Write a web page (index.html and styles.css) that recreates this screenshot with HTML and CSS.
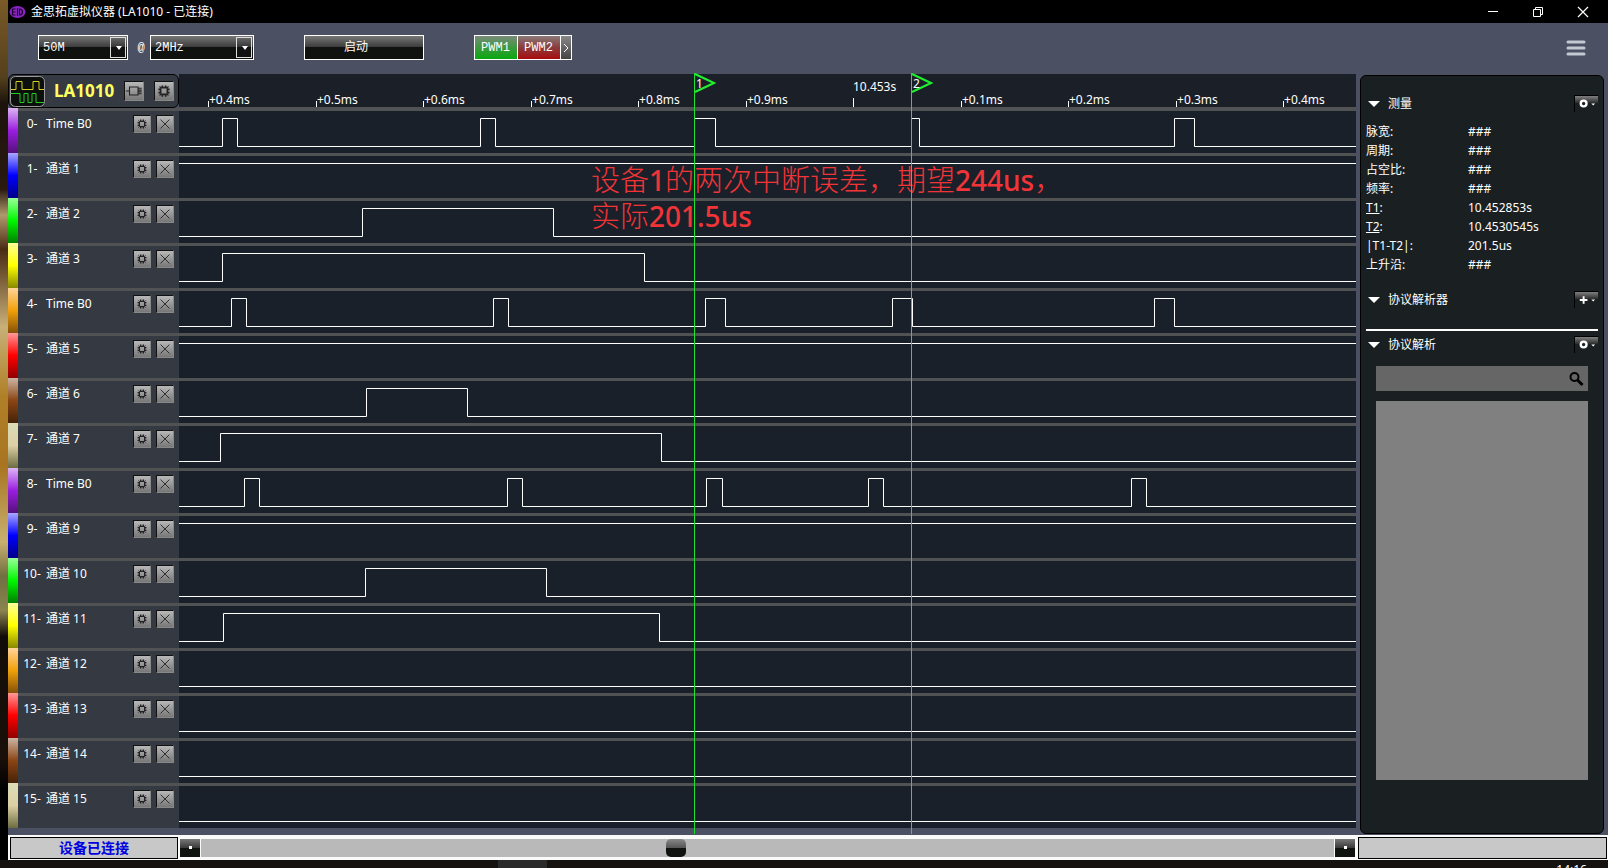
FILE: index.html
```html
<!DOCTYPE html>
<html lang="zh-CN">
<head>
<meta charset="utf-8">
<title>金思拓虚拟仪器 (LA1010 - 已连接)</title>
<link rel="stylesheet" href="styles.css">
</head>
<body>
<svg class="defs" aria-hidden="true">
  <symbol id="gear" viewBox="0 0 18 18">
    <path d="M6.500 6h5M6.500 12h5M6 6.500v5M12 6.500v5" fill="none" stroke="#222" stroke-width="1.500"/>
    <path d="M7.500 4v2M10.500 4v2M7.500 12v2M10.500 12v2M4 7.500h2M4 10.500h2M12 7.500h2M12 10.500h2" stroke="#222" stroke-width="1.500"/>
    <path d="M5 5l1.500 1.500M13 5l-1.500 1.500M5 13l1.500-1.500M13 13l-1.500-1.500" stroke="#222"/>
  </symbol>
  <symbol id="cross" viewBox="0 0 18 18"><path d="M4 4l10 10M14 4L4 14" stroke="#222" stroke-width="1"/></symbol>
  <symbol id="ring" viewBox="0 0 24 16"><circle cx="9" cy="7.500" r="3" fill="none" stroke="#fff" stroke-width="2.500"/><path d="M17 7.500h4l-2 2z" fill="#fff"/></symbol>
  <symbol id="plus" viewBox="0 0 24 16"><path d="M5 8h8M9 4v8" stroke="#fff" stroke-width="2"/><path d="M17 7.500h4l-2 2z" fill="#fff"/></symbol>
</svg>
<div class="desktop">
  <div class="wallpaper"></div>
  <div class="app">
    <header class="titlebar">
      <svg class="logo" viewBox="0 0 16 14"><ellipse cx="8" cy="7" rx="8" ry="6" fill="#8a24c4"/><path d="M3 4v6h3M3 4h3M3 7h3M8 3v8M10 4c4 0 4 6 0 6z" fill="none" stroke="#200030" stroke-width="1.200"/></svg>
      <h1 class="title">金思拓虚拟仪器 (LA1010 - 已连接)</h1>
      <button class="win" aria-label="最小化"><svg viewBox="0 0 12 12"><path d="M1 5.500h10" stroke="#fff"/></svg></button>
      <button class="win" aria-label="还原"><svg viewBox="0 0 12 12"><path d="M1.500 3.500h7v7h-7zM3.500 3.500v-2h7v7h-2" fill="none" stroke="#fff"/></svg></button>
      <button class="win" aria-label="关闭"><svg viewBox="0 0 12 12"><path d="M1 1l10 10M11 1L1 11" stroke="#fff" stroke-width="1.200"/></svg></button>
    </header>
    <div class="toolbar">
      <span class="combo depth"><select aria-label="采样深度"><option>50M</option></select></span>
      <span class="at">@</span>
      <span class="combo rate"><select aria-label="采样频率"><option>2MHz</option></select></span>
      <button class="start">启动</button>
      <div class="pwm"><button class="pwm1">PWM1</button><button class="pwm2">PWM2</button><button class="more" aria-label="更多"><svg viewBox="0 0 8 12"><path d="M2 2l4 4-4 4" fill="none" stroke="#fff"/></svg></button></div>
      <button class="menu" aria-label="菜单"><svg viewBox="0 0 20 16"><path d="M2 2h16M2 8h16M2 14h16" stroke="#c4c8d2" stroke-width="3" stroke-linecap="round"/></svg></button>
    </div>
    <main class="main">
      <section class="analyzer">
        <div class="head">
          <div class="device">
            <svg class="wave-icon" viewBox="0 0 35 31"><rect x=".5" y=".5" width="34" height="30" rx="5" fill="#0c0f0c" stroke="#9a9a9a"/><path d="M1 13.500h5v-8h6v8h11v-8h6v8h5" fill="none" stroke="#d8d020"/><path d="M1 17.500h9v9h4v-9h4v9h4v-9h4v9h8" fill="none" stroke="#20d020"/></svg>
            <strong class="model">LA1010</strong>
            <button class="sq" aria-label="芯片"><svg viewBox="0 0 20 20"><path d="M5 5.500h9.500v9H5zM1 10H5M14.500 7h4M14.500 9h4M14.500 11h4M14.500 13h4" fill="none" stroke="#222" stroke-width="1.200"/></svg></button>
            <button class="sq" aria-label="设备设置"><svg viewBox="1 1 16 16"><use href="#gear" width="18" height="18"/></svg></button>
          </div>
          <div class="ruler">
            <span class="tick" style="left:2.46%">+0.4ms</span>
            <span class="tick" style="left:11.64%">+0.5ms</span>
            <span class="tick" style="left:20.73%">+0.6ms</span>
            <span class="tick" style="left:29.91%">+0.7ms</span>
            <span class="tick" style="left:39%">+0.8ms</span>
            <span class="tick" style="left:48.17%">+0.9ms</span>
            <span class="tick major" style="left:57.26%">10.453s</span>
            <span class="tick" style="left:66.44%">+0.1ms</span>
            <span class="tick" style="left:75.53%">+0.2ms</span>
            <span class="tick" style="left:84.71%">+0.3ms</span>
            <span class="tick" style="left:93.8%">+0.4ms</span>
          </div>
        </div>
        <div class="row purple"><div class="channel"><span class="num">0-</span><span class="name">Time B0</span><button aria-label="设置通道 0"><svg><use href="#gear"/></svg></button><button aria-label="关闭通道 0"><svg><use href="#cross"/></svg></button></div><svg class="wave" viewBox="0 0 1177 42" preserveAspectRatio="none"><path d="M0 35.500H43.500V7.500H58.500V35.500H301.500V7.500H316.500V35.500H515.500V7.500H536.500V35.500H732.500V7.500H740.500V35.500H995.500V7.500H1015.500V35.500H1177"/></svg></div>
        <div class="row blue"><div class="channel"><span class="num">1-</span><span class="name">通道 1</span><button aria-label="设置通道 1"><svg><use href="#gear"/></svg></button><button aria-label="关闭通道 1"><svg><use href="#cross"/></svg></button></div><svg class="wave" viewBox="0 0 1177 42" preserveAspectRatio="none"><path d="M0 7.500H1177"/></svg></div>
        <div class="row green"><div class="channel"><span class="num">2-</span><span class="name">通道 2</span><button aria-label="设置通道 2"><svg><use href="#gear"/></svg></button><button aria-label="关闭通道 2"><svg><use href="#cross"/></svg></button></div><svg class="wave" viewBox="0 0 1177 42" preserveAspectRatio="none"><path d="M0 35.500H183.500V7.500H374.500V35.500H1177"/></svg></div>
        <div class="row yellow"><div class="channel"><span class="num">3-</span><span class="name">通道 3</span><button aria-label="设置通道 3"><svg><use href="#gear"/></svg></button><button aria-label="关闭通道 3"><svg><use href="#cross"/></svg></button></div><svg class="wave" viewBox="0 0 1177 42" preserveAspectRatio="none"><path d="M0 35.500H43.500V7.500H465.500V35.500H1177"/></svg></div>
        <div class="row orange"><div class="channel"><span class="num">4-</span><span class="name">Time B0</span><button aria-label="设置通道 4"><svg><use href="#gear"/></svg></button><button aria-label="关闭通道 4"><svg><use href="#cross"/></svg></button></div><svg class="wave" viewBox="0 0 1177 42" preserveAspectRatio="none"><path d="M0 35.500H52.500V7.500H67.500V35.500H314.500V7.500H329.500V35.500H526.500V7.500H546.500V35.500H713.500V7.500H733.500V35.500H975.500V7.500H995.500V35.500H1177"/></svg></div>
        <div class="row red"><div class="channel"><span class="num">5-</span><span class="name">通道 5</span><button aria-label="设置通道 5"><svg><use href="#gear"/></svg></button><button aria-label="关闭通道 5"><svg><use href="#cross"/></svg></button></div><svg class="wave" viewBox="0 0 1177 42" preserveAspectRatio="none"><path d="M0 7.500H1177"/></svg></div>
        <div class="row brown"><div class="channel"><span class="num">6-</span><span class="name">通道 6</span><button aria-label="设置通道 6"><svg><use href="#gear"/></svg></button><button aria-label="关闭通道 6"><svg><use href="#cross"/></svg></button></div><svg class="wave" viewBox="0 0 1177 42" preserveAspectRatio="none"><path d="M0 35.500H187.500V7.500H288.500V35.500H1177"/></svg></div>
        <div class="row tan"><div class="channel"><span class="num">7-</span><span class="name">通道 7</span><button aria-label="设置通道 7"><svg><use href="#gear"/></svg></button><button aria-label="关闭通道 7"><svg><use href="#cross"/></svg></button></div><svg class="wave" viewBox="0 0 1177 42" preserveAspectRatio="none"><path d="M0 35.500H41.500V7.500H482.500V35.500H1177"/></svg></div>
        <div class="row purple"><div class="channel"><span class="num">8-</span><span class="name">Time B0</span><button aria-label="设置通道 8"><svg><use href="#gear"/></svg></button><button aria-label="关闭通道 8"><svg><use href="#cross"/></svg></button></div><svg class="wave" viewBox="0 0 1177 42" preserveAspectRatio="none"><path d="M0 35.500H65.500V7.500H80.500V35.500H328.500V7.500H343.500V35.500H527.500V7.500H543.500V35.500H689.500V7.500H704.500V35.500H952.500V7.500H967.500V35.500H1177"/></svg></div>
        <div class="row blue"><div class="channel"><span class="num">9-</span><span class="name">通道 9</span><button aria-label="设置通道 9"><svg><use href="#gear"/></svg></button><button aria-label="关闭通道 9"><svg><use href="#cross"/></svg></button></div><svg class="wave" viewBox="0 0 1177 42" preserveAspectRatio="none"><path d="M0 7.500H1177"/></svg></div>
        <div class="row green"><div class="channel"><span class="num">10-</span><span class="name">通道 10</span><button aria-label="设置通道 10"><svg><use href="#gear"/></svg></button><button aria-label="关闭通道 10"><svg><use href="#cross"/></svg></button></div><svg class="wave" viewBox="0 0 1177 42" preserveAspectRatio="none"><path d="M0 35.500H186.500V7.500H367.500V35.500H1177"/></svg></div>
        <div class="row yellow"><div class="channel"><span class="num">11-</span><span class="name">通道 11</span><button aria-label="设置通道 11"><svg><use href="#gear"/></svg></button><button aria-label="关闭通道 11"><svg><use href="#cross"/></svg></button></div><svg class="wave" viewBox="0 0 1177 42" preserveAspectRatio="none"><path d="M0 35.500H44.500V7.500H480.500V35.500H1177"/></svg></div>
        <div class="row orange"><div class="channel"><span class="num">12-</span><span class="name">通道 12</span><button aria-label="设置通道 12"><svg><use href="#gear"/></svg></button><button aria-label="关闭通道 12"><svg><use href="#cross"/></svg></button></div><svg class="wave" viewBox="0 0 1177 42" preserveAspectRatio="none"><path d="M0 35.500H1177"/></svg></div>
        <div class="row red"><div class="channel"><span class="num">13-</span><span class="name">通道 13</span><button aria-label="设置通道 13"><svg><use href="#gear"/></svg></button><button aria-label="关闭通道 13"><svg><use href="#cross"/></svg></button></div><svg class="wave" viewBox="0 0 1177 42" preserveAspectRatio="none"><path d="M0 35.500H1177"/></svg></div>
        <div class="row brown"><div class="channel"><span class="num">14-</span><span class="name">通道 14</span><button aria-label="设置通道 14"><svg><use href="#gear"/></svg></button><button aria-label="关闭通道 14"><svg><use href="#cross"/></svg></button></div><svg class="wave" viewBox="0 0 1177 42" preserveAspectRatio="none"><path d="M0 35.500H1177"/></svg></div>
        <div class="row tan"><div class="channel"><span class="num">15-</span><span class="name">通道 15</span><button aria-label="设置通道 15"><svg><use href="#gear"/></svg></button><button aria-label="关闭通道 15"><svg><use href="#cross"/></svg></button></div><svg class="wave" viewBox="0 0 1177 42" preserveAspectRatio="none"><path d="M0 35.500H1177"/></svg></div>
        <div class="overlay">
          <p class="note">设备<b>1</b>的两次中断误差，期望<b>244us</b>，<br>实际<b>201.5us</b></p>
          <div class="marker" style="left:43.76%"><svg viewBox="0 0 22 20"><path d="M1 1l19 9-19 9" fill="none" stroke="#20f030" stroke-width="2"/></svg><span>1</span></div>
          <div class="marker" style="left:62.2%"><svg viewBox="0 0 22 20"><path d="M1 1l19 9-19 9" fill="none" stroke="#20f030" stroke-width="2"/></svg><span>2</span></div>
        </div>
      </section>
      <aside class="panel">
        <div class="sec"><i class="tri"></i><h2>测量</h2><button aria-label="测量设置"><svg><use href="#ring"/></svg></button></div>
        <dl class="measure">
          <dt>脉宽:</dt><dd>###</dd>
          <dt>周期:</dt><dd>###</dd>
          <dt>占空比:</dt><dd>###</dd>
          <dt>频率:</dt><dd>###</dd>
          <dt><u>T1</u>:</dt><dd>10.452853s</dd>
          <dt><u>T2</u>:</dt><dd>10.4530545s</dd>
          <dt>|T1-T2|:</dt><dd>201.5us</dd>
          <dt>上升沿:</dt><dd>###</dd>
        </dl>
        <div class="sec"><i class="tri"></i><h2>协议解析器</h2><button aria-label="添加解析器"><svg><use href="#plus"/></svg></button></div>
        <hr>
        <div class="sec"><i class="tri"></i><h2>协议解析</h2><button aria-label="解析设置"><svg><use href="#ring"/></svg></button></div>
        <div class="search"><input type="text" aria-label="搜索"><svg viewBox="0 0 16 16"><circle cx="6.500" cy="6" r="4" fill="none" stroke="#000" stroke-width="2"/><path d="M9.500 9l5 5" stroke="#000" stroke-width="3"/></svg></div>
        <div class="results"></div>
      </aside>
    </main>
    <footer class="status">
      <div class="box conn">设备已连接</div>
      <div class="scroll"><button aria-label="向左滚动"></button><input type="range" aria-label="时间轴位置" min="0" max="1113" value="465"><button aria-label="向右滚动"></button></div>
      <div class="box info"></div>
    </footer>
  </div>
</div>
<div class="taskbar"><span class="task"></span><span class="clock">14:16</span></div>
</body>
</html>
```
FILE: styles.css
```css
* { box-sizing: border-box; }
body {
  margin: 0;
  height: 100vh;
  display: flex;
  flex-direction: column;
  overflow: hidden;
  background: #141210;
  color: #fff;
  font: 12px/18px "Noto Sans", "Noto Sans CJK SC", sans-serif;
}
button, select, input { font: inherit; color: inherit; margin: 0; padding: 0; border: 0; border-radius: 0; }
svg { display: block; }
.defs { position: absolute; width: 0; height: 0; }
.desktop { display: flex; flex: none; }
.wallpaper {
  width: 8px;
  background: linear-gradient(#7a5a28 0, #54401c 9%, #1c130c 12%, #2a1a10 22%, #b09a6c 25%, #4a2c14 29%, #c8b078 38%, #b08028 46%, #a87420 54%, #c8b070 63%, #707040 67%, #8a8450 71%, #120c08 74%, #1a100a 88%, #000 92%);
}
.app { flex: 1; min-width: 0; display: flex; flex-direction: column; background: #4b5162; }

.titlebar { display: flex; align-items: center; height: 23px; padding-left: 1px; background: #000; }
.logo { width: 17px; height: 14px; }
.title { flex: 1; margin: 0 0 0 5px; font-size: 12px; font-weight: 400; line-height: 22px; }
.win { width: 45px; height: 20px; display: grid; place-items: center; background: none; }
.win svg { width: 12px; height: 12px; }
.titlebar .win:last-child { margin-right: 3px; }

.toolbar { display: flex; align-items: center; height: 51px; padding: 0 22px 2px 30px; font-family: "Liberation Mono", "Noto Sans CJK SC", monospace; }
.combo { position: relative; height: 25px; border: 1px solid #fff; background: linear-gradient(#777, #3a3a3a 49%, #101210 50%, #101210); }
.combo::after {
  content: "";
  position: absolute;
  inset: 1px 1px 1px auto;
  width: 14px;
  border: 1px solid #ddd;
  background: linear-gradient(#666, #333 49%, #111 50%);
  pointer-events: none;
}
.combo::before {
  content: "";
  position: absolute;
  z-index: 1;
  top: 10px;
  right: 5px;
  border: 3px solid transparent;
  border-top: 4px solid #fff;
  border-bottom: 0;
  pointer-events: none;
}
.combo select { appearance: none; width: 100%; height: 23px; padding-left: 4px; background: none; }
.combo option { color: #000; }
.depth { width: 90px; }
.rate { width: 104px; }
.at { width: 22px; padding-left: 4px; text-align: center; }
.start { width: 120px; height: 25px; margin-left: 50px; padding-right: 16px; border: 1px solid #fff; background: linear-gradient(#777, #3a3a3a 49%, #101210 50%, #101210); }
.pwm { display: flex; height: 25px; margin-left: 50px; border: 1px solid #fff; }
.pwm button { width: 43px; padding-right: 1px; border-right: 1px solid #fff; }
.pwm .pwm1 { background: linear-gradient(#7a8a7a, #3c9a40 50%, #08a810); }
.pwm .pwm2 { background: linear-gradient(#8a7a7a, #8a3c3c 50%, #a80c10); }
.pwm .more { width: 10px; padding: 0; border: 0; display: grid; place-items: center; background: linear-gradient(#888, #444); }
.more svg { width: 8px; height: 12px; }
.menu { margin-left: auto; background: none; }
.menu svg { width: 20px; height: 16px; }

.main { display: flex; gap: 4px; padding-right: 4px; }
.analyzer { position: relative; flex: 1; min-width: 0; padding-bottom: 7px; }
.head { display: grid; grid-template-columns: 171px 1fr; height: 34px; }
.device { display: flex; align-items: center; padding-left: 1px; border: 1px solid #000; border-radius: 6px; background: #353a42; }
.wave-icon { width: 35px; height: 31px; }
.model { width: 70px; margin-left: 9px; font-size: 17px; color: #ffff60; }
.sq { width: 20px; height: 20px; margin-right: 10px; }
.sq:last-child { margin: 0; }
.sq, .channel button { background: linear-gradient(#b8b8b8, #777); border: 1px solid #111; border-right-color: #888; border-bottom-color: #888; }
.sq svg { width: 18px; height: 18px; }
.ruler { position: relative; background: #1a1f28; border-bottom: 1px solid #505254; }
.tick { position: absolute; bottom: 0; height: 16px; padding-left: 1px; line-height: 18px; }
.tick::before { content: ""; position: absolute; left: 0; bottom: 0; width: 1px; height: 6px; background: #fff; }
.major { height: 29px; padding: 0; }
.tick.major::before { height: 9px; }

.row { display: grid; grid-template-columns: 10px 161px 1fr; height: 45px; }
.row::before { content: ""; background: linear-gradient(var(--light), var(--mid) 50%, var(--dark)); }
.purple { --light: #dcb4f4; --mid: #9a1ee0; --dark: #54107c; }
.blue { --light: #a8a8ff; --mid: #0000ff; --dark: #000088; }
.green { --light: #98ff98; --mid: #00f800; --dark: #008000; }
.yellow { --light: #ffff98; --mid: #ffff00; --dark: #888800; }
.orange { --light: #ffd498; --mid: #f0a008; --dark: #845008; }
.red { --light: #ff9898; --mid: #ff0000; --dark: #900000; }
.brown { --light: #ccb4a4; --mid: #8b4513; --dark: #452208; }
.tan { --light: #dcdcb8; --mid: #dcd0a4; --dark: #6c6c40; }
.channel { display: flex; align-items: flex-start; gap: 5px; padding: 4px 5px 0 2px; border-top: 3px solid #505254; background: #353a42; }
.num { width: 24px; text-align: center; }
.name { flex: 1; margin-left: -3px; white-space: nowrap; }
.channel button { width: 18px; height: 18px; }
.channel button svg { width: 16px; height: 16px; }
.wave { width: 100%; height: 45px; border-top: 3px solid #505254; background: #1a2029; }
.wave path { fill: none; stroke: #fff; vector-effect: non-scaling-stroke; }

.overlay { position: absolute; inset: 0 0 1px 171px; pointer-events: none; }
.note { position: absolute; top: 88px; left: 35%; margin: 0; font-size: 29px; font-weight: 300; line-height: 36px; color: #f03438; white-space: nowrap; }
.note b { font-size: 28px; font-weight: 500; }
.marker { position: absolute; top: -1px; bottom: 0; border-left: 1px solid #20e030; }
.marker svg { width: 22px; height: 20px; margin-left: -1px; }
.marker span { position: absolute; top: 2px; left: 1px; }

.panel { flex: none; width: 244px; margin: 1px 0; padding: 19px 5px 53px; display: flex; flex-direction: column; border: 1px solid #000; border-radius: 6px; background: #1a2021; }
.sec { display: flex; align-items: center; height: 17px; flex: none; padding-left: 2px; }
.tri { border: 6px solid transparent; border-top-color: #fff; border-bottom: 0; }
.sec h2 { flex: 1; margin: 0 0 0 8px; font-size: 12px; font-weight: 400; }
.sec button { width: 24px; height: 17px; border: 1px solid #000; border-right: 0; border-bottom: 0; background: linear-gradient(#808080, #333 40%, #1a2021 45%); }
.sec svg { width: 23px; height: 16px; }
.measure { display: grid; grid-template-columns: 102px 1fr; grid-auto-rows: 19px; margin: 10px 0 17px; line-height: 19px; }
.measure dd { margin: 0; }
.panel hr { width: 100%; height: 2px; margin: 21px 0 5px; border: 0; background: #fff; flex: none; }
.search { display: flex; align-items: center; flex: none; height: 25px; margin: 13px 10px 10px; padding-right: 4px; background: #666; }
.search input { flex: 1; min-width: 0; height: 25px; padding: 0 6px; background: none; }
.search svg { width: 16px; height: 16px; }
.results { flex: 1; margin: 0 10px; background: #808080; }

.status { display: flex; align-items: center; height: 25px; padding: 0 1px 0 2px; background: #fafafa; }
.box { height: 22px; border: 1px solid #000; background: #c8c8c8; }
.conn { width: 168px; font-size: 14px; line-height: 20px; font-weight: 700; text-align: center; color: #0000e0; }
.scroll { flex: 1; display: flex; gap: 1px; margin: 0 3px 0 2px; height: 18px; }
.scroll button { width: 20px; background: linear-gradient(#fff, #fff) 50% 50% / 3px 3px no-repeat, linear-gradient(#777, #3a3a3a 49%, #101210 50%, #101210); }
.scroll input { appearance: none; flex: 1; min-width: 0; height: 18px; background: #b9b9b9; }
.scroll input::-webkit-slider-thumb { appearance: none; width: 20px; height: 18px; border-radius: 5px; background: linear-gradient(#888, #555 49%, #101210 50%, #101210); }
.info { width: 249px; }

.taskbar { display: flex; flex: 1; min-height: 0; overflow: hidden; justify-content: space-between; padding: 0 21px 0 498px; background: #151210; }
.task { width: 49px; background: #2a2a2a; }
.clock { padding-top: 1px; }
```
